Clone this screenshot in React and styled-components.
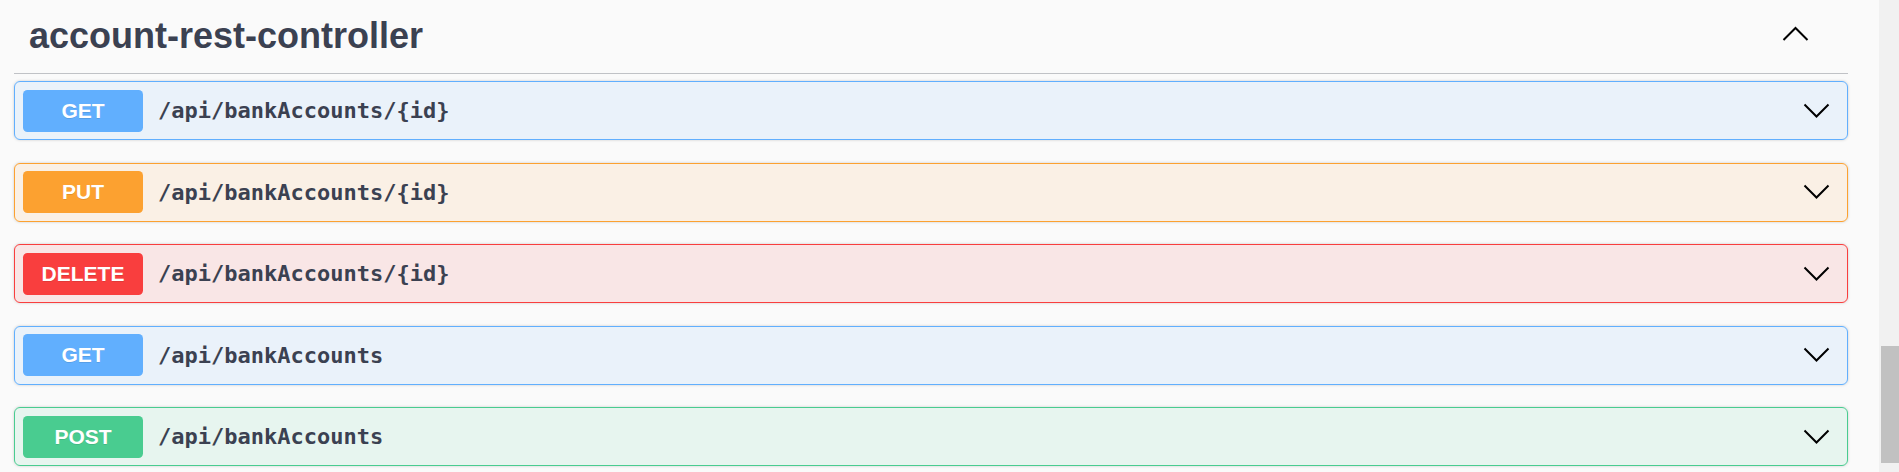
import styled, { createGlobalStyle } from 'styled-components';

const GlobalStyle = createGlobalStyle`
  body {
    margin: 0;
    background: #fafafa;
    overflow: hidden;
  }
`;

const METHODS = {
  get: { color: '#61affe', bg: 'rgba(97, 175, 254, 0.1)' },
  put: { color: '#fca130', bg: 'rgba(252, 161, 48, 0.1)' },
  delete: { color: '#f93e3e', bg: 'rgba(249, 62, 62, 0.1)' },
  post: { color: '#49cc90', bg: 'rgba(73, 204, 144, 0.1)' },
};

const endpoints = [
  { method: 'get', path: '/api/bankAccounts/{id}' },
  { method: 'put', path: '/api/bankAccounts/{id}' },
  { method: 'delete', path: '/api/bankAccounts/{id}' },
  { method: 'get', path: '/api/bankAccounts' },
  { method: 'post', path: '/api/bankAccounts' },
];

const Page = styled.div`
  display: flex;
  height: 472px;
`;

const Content = styled.div`
  flex: 1;
  padding: 0 31px 0 14px;
`;

const Header = styled.div`
  display: flex;
  align-items: flex-start;
  justify-content: space-between;
  height: 74px;
  box-sizing: border-box;
  border-bottom: 1px solid rgba(59, 65, 81, 0.3);
`;

const Title = styled.h3`
  margin: 0;
  padding: 17.5px 0 0 15px;
  font-family: "Liberation Sans", Arial, sans-serif;
  font-size: 36px;
  font-weight: 700;
  line-height: 1;
  color: #3b4151;
`;

const Arrow = styled.svg`
  display: block;
  flex-shrink: 0;
  margin: ${p => (p.$up ? '26px 38px 0 0' : '0 8px 0 auto')};
`;

const List = styled.div`
  padding-top: 7px;
`;

const Opblock = styled.div`
  display: flex;
  align-items: center;
  height: 59px;
  box-sizing: border-box;
  margin-bottom: 22.5px;
  padding: 0 8px;
  border: 1px solid ${p => METHODS[p.$method].color};
  border-radius: 6px;
  background: ${p => METHODS[p.$method].bg};
  box-shadow: 0 0 3px rgba(0, 0, 0, 0.19);
`;

const Method = styled.span`
  display: flex;
  align-items: center;
  justify-content: center;
  width: 120px;
  height: 42px;
  border-radius: 4.5px;
  background: ${p => METHODS[p.$method].color};
  color: #fff;
  font-family: "Liberation Sans", Arial, sans-serif;
  font-size: 21px;
  font-weight: 700;
  text-shadow: 0 1px 0 rgba(0, 0, 0, 0.1);
`;

const Path = styled.span`
  margin-left: 15px;
  font-family: "DejaVu Sans Mono", monospace;
  font-size: 22px;
  font-weight: 700;
  color: #3b4151;
`;

const Scrollbar = styled.div`
  width: 20px;
  box-sizing: border-box;
  padding: 346px 0 0 2px;
  background: #f1f1f1;
`;

const Thumb = styled.div`
  height: 117px;
  background: #c1c1c1;
`;

function Chevron({ up }) {
  return (
    <Arrow $up={up} width="28" height="16" viewBox="0 0 28 16">
      <polyline
        points={up ? '1.5,14 13.5,2 25.5,14' : '1.5,1.5 13.5,13.5 25.5,1.5'}
        fill="none"
        stroke="#000"
        strokeWidth="2"
      />
    </Arrow>
  );
}

export default function App() {
  return (
    <Page>
      <GlobalStyle />
      <Content>
        <Header>
          <Title>account-rest-controller</Title>
          <Chevron up />
        </Header>
        <List>
          {endpoints.map((e, i) => (
            <Opblock key={i} $method={e.method}>
              <Method $method={e.method}>{e.method.toUpperCase()}</Method>
              <Path>{e.path}</Path>
              <Chevron />
            </Opblock>
          ))}
        </List>
      </Content>
      <Scrollbar>
        <Thumb />
      </Scrollbar>
    </Page>
  );
}
